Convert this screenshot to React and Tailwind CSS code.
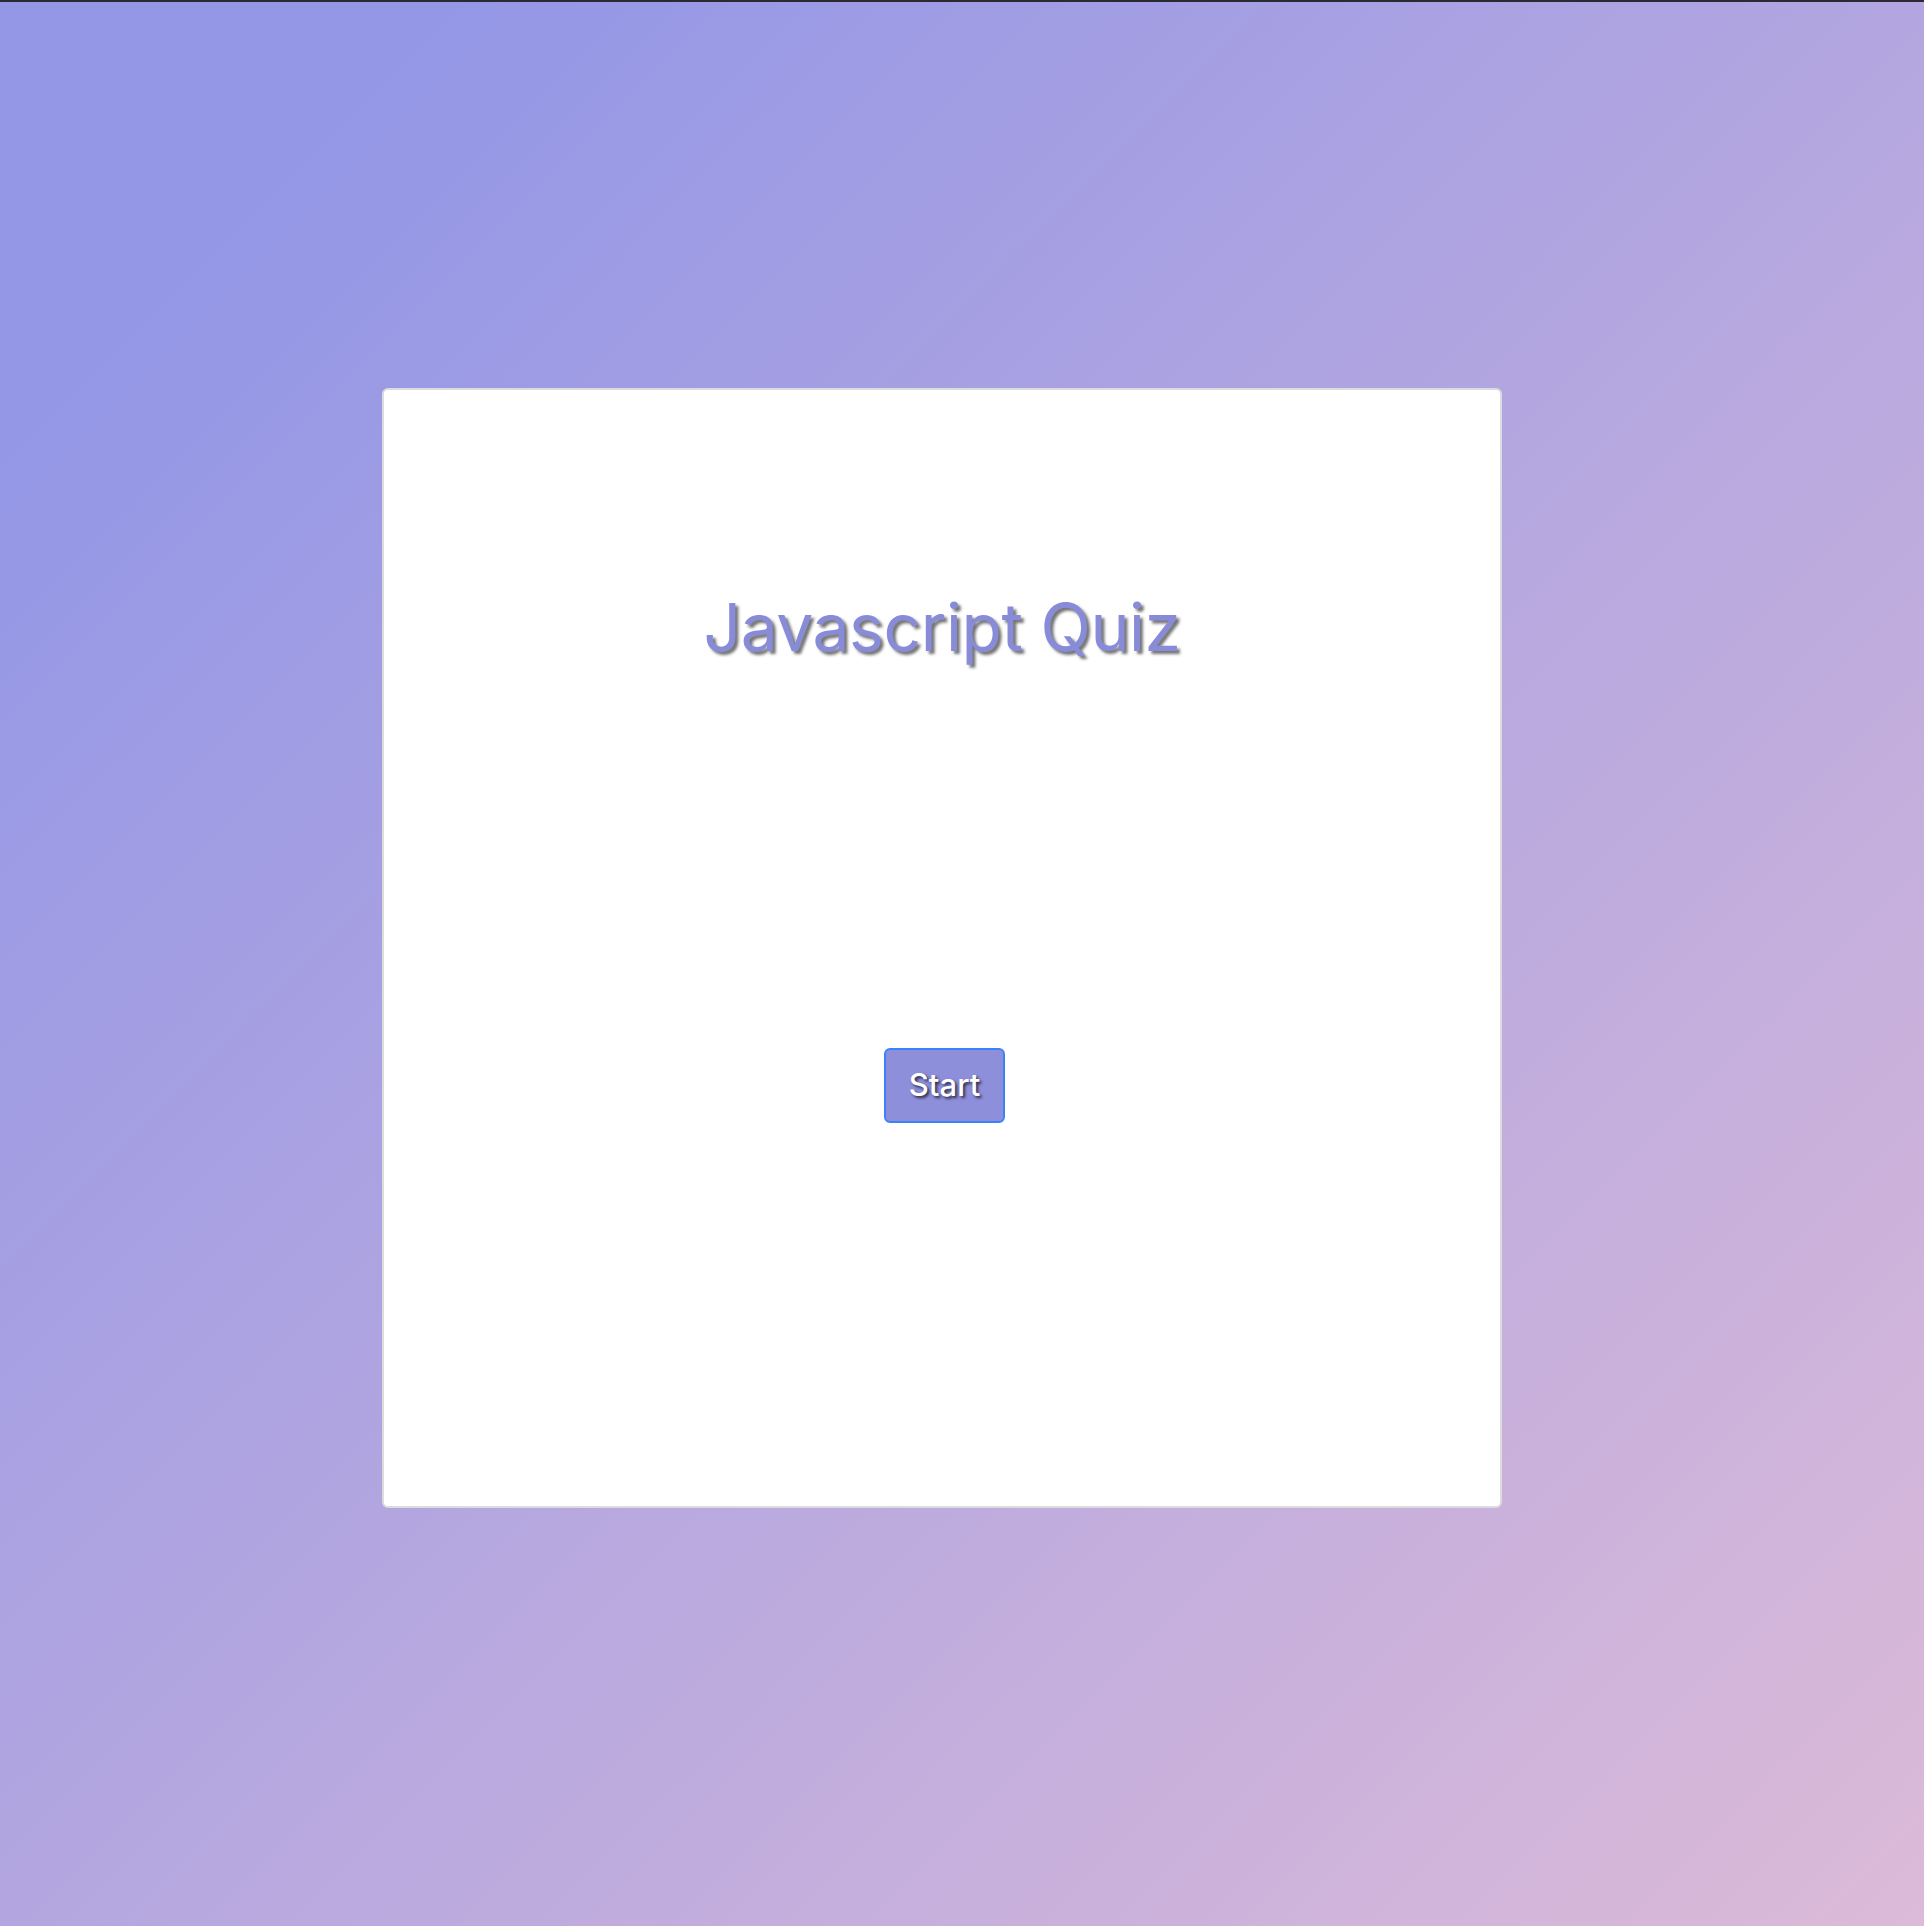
export default function App() {
  return (
    <div className="min-h-[1926px] w-full border-t-2 border-[#2b2a33] bg-[linear-gradient(to_bottom_right,#9497e6_12%,#dcbad8_100%)] pt-[386px] pl-[382px]">
      <div className="flex h-[1120px] w-[1120px] flex-col items-center rounded-md border-2 border-[#dcdcdc] bg-white pt-[197px]">
        <h1
          className="text-[66px] leading-[80px] font-normal text-[#888cd8] [text-shadow:3px_3px_3px_rgba(0,0,0,0.55)]"
          style={{ fontFamily: 'Inter, "Noto Sans", sans-serif', letterSpacing: '-0.5px' }}
        >
          Javascript Quiz
        </h1>
        <button
          className="mt-[381px] ml-[5px] flex h-[75px] w-[121px] items-center justify-center rounded-md border-2 border-[#3b82f6] bg-[#8e8fdb] text-[31px] font-medium text-white [text-shadow:2px_2px_3px_rgba(0,0,0,0.7)]"
          style={{ fontFamily: 'Inter, "Liberation Sans", sans-serif' }}
        >
          Start
        </button>
      </div>
    </div>
  );
}
